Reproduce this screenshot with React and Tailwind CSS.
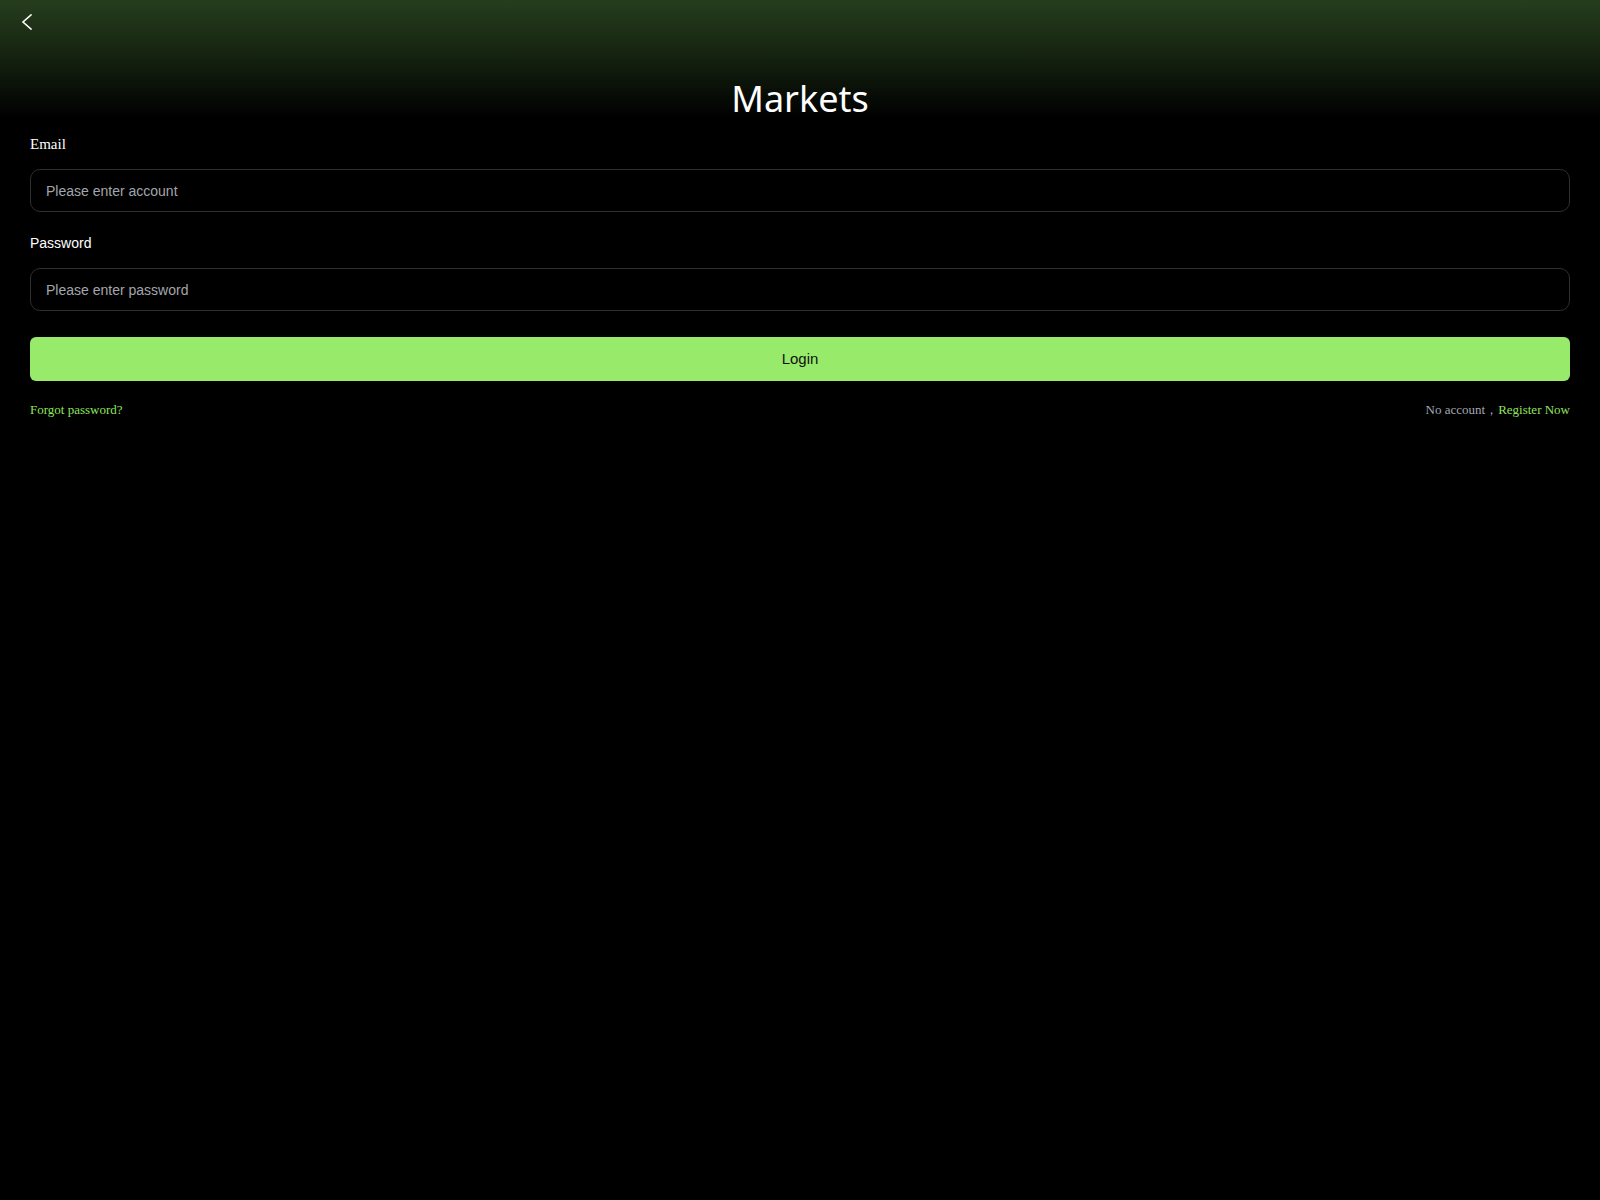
import React from "react";

export default function App() {
  return (
    <div className="min-h-screen w-full bg-black bg-[linear-gradient(180deg,#263d1d_0px,#1a2b14_40px,#000_118px)] bg-no-repeat font-['Liberation_Sans',Arial,sans-serif]">
      <div className="h-[44px] flex items-center pl-[18px]">
        <svg width="16" height="16" viewBox="0 0 16 16" fill="none" stroke="#ffffff" strokeWidth="1.6" strokeLinecap="square">
          <polyline points="13,1 5,8 13,15" />
        </svg>
      </div>
      <h1 className="mt-[31px] text-center text-white text-[36px] leading-[48px] font-normal font-['Noto_Sans','Open_Sans',sans-serif]">
        Markets
      </h1>
      <div className="px-[30px]">
        <div className="mt-[11px] text-white text-[15px] leading-[20px] font-['Liberation_Serif','Times_New_Roman',serif]">
          Email
        </div>
        <input
          className="mt-[15px] block w-full h-[43px] rounded-[10px] border border-[#2e2e2e] bg-black px-[15px] text-[14px] text-white placeholder:text-[#a3a6ad] outline-none"
          placeholder="Please enter account"
        />
        <div className="mt-[21px] text-white text-[14px] leading-[20px]">Password</div>
        <input
          type="password"
          className="mt-[15px] block w-full h-[43px] rounded-[10px] border border-[#2e2e2e] bg-black px-[15px] text-[14px] text-white placeholder:text-[#a3a6ad] outline-none"
          placeholder="Please enter password"
        />
        <button className="mt-[26px] w-full h-[44px] rounded-[6px] bg-[#98ea6a] text-[15px] text-[#111] flex items-center justify-center">
          Login
        </button>
        <div className="mt-[20px] flex justify-between text-[13px] leading-[18px] font-['Liberation_Serif','Times_New_Roman',serif]">
          <span className="text-[#8fe35f]">Forgot password?</span>
          <span>
            <span className="text-[#a3a8b3]">No account，</span>
            <span className="text-[#8fe35f]">Register Now</span>
          </span>
        </div>
      </div>
    </div>
  );
}
